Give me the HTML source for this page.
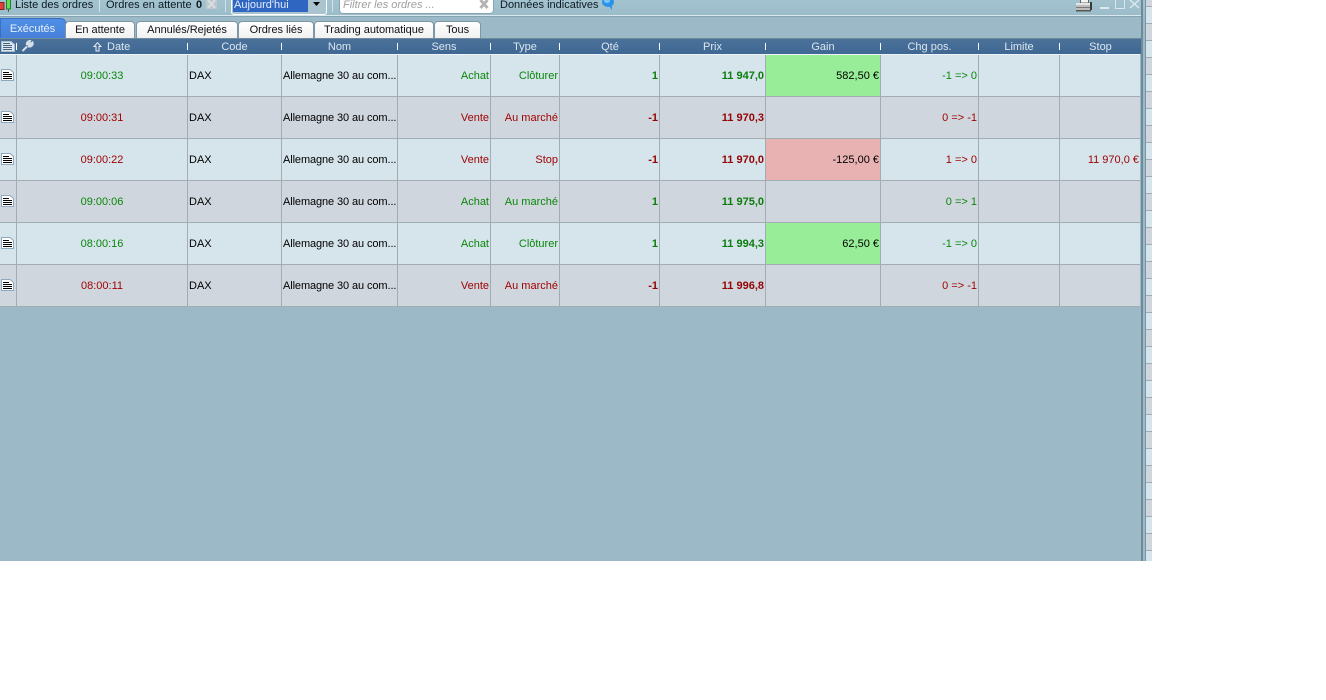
<!DOCTYPE html>
<html><head><meta charset="utf-8"><style>
html,body{margin:0;padding:0;background:#fff;width:1326px;height:700px;overflow:hidden}
body{font-family:"Liberation Sans",sans-serif;font-size:11px;position:relative}
.a{position:absolute}
.bar{left:0;top:0;width:1146px;height:15px;background:linear-gradient(#a3c3d0,#9bbcc9);overflow:hidden}
.t{position:absolute;white-space:nowrap;color:#0c1a22;line-height:13px;top:-1px}
.sep{position:absolute;top:0;width:1px;height:12px;background:#d2e2e8}
.tab{position:absolute;top:21px;height:17px;line-height:17px;background:linear-gradient(#fff,#f0f0f0);border:1px solid #7d97a4;border-bottom:0;border-radius:4px 4px 0 0;text-align:center;color:#0e1116;box-sizing:content-box;letter-spacing:-.03px}
.hd{position:absolute;left:0;top:39px;width:1141px;height:15px;background:linear-gradient(#4b7199,#3f6894);color:#dbe6ef;line-height:15px}
.hd span{position:absolute;text-align:center;top:1px}
.hd i{position:absolute;top:4px;height:7px;width:1px;background:#fff}
table{position:absolute;left:0;top:55px;border-collapse:separate;border-spacing:0;table-layout:fixed;width:1140px}
td{height:40px;padding:1px 1px 0 0;border-bottom:1px solid #a2acb3;border-right:1px solid #a2acb3;text-align:right;white-space:nowrap;overflow:hidden;box-sizing:content-box;line-height:40px;color:#000}
tr.o td{background:#d6e4ec}
tr.e td{background:#d0d6dd}
td.l{text-align:left;padding:1px 0 0 1px}
td.n{letter-spacing:-.1px}
td.c{text-align:center;padding:1px 0 0 0}
td.i{padding:0}
td.x{border-right:0}
td.h{padding-right:1px}
.g{color:#0a860a}.r{color:#a00404}
b.g{color:#0a7d0a}b.r{color:#940404}
tr.o td.pg,tr.e td.pg{background:#98ee98}
tr.o td.pr,tr.e td.pr{background:#e9b2b2}
.doc{display:block;margin:0 0 0 1px;position:relative;top:-1px}
</style></head><body>
<div class="a" style="left:0;top:0;width:1146px;height:561px;background:#9bb9c7"></div>
<div class="a bar">
<svg class="a" style="left:0;top:0" width="14" height="12"><rect x="-1" y="2.500" width="5" height="7" fill="#e0403a" stroke="#8a2020"/><rect x="6.500" y="-1" width="4" height="10" fill="#5fe05a" stroke="#2a7a2a"/><rect x="8" y="9" width="1" height="3" fill="#2a7a2a"/></svg>
<div class="t" style="left:15px">Liste des ordres</div>
<div class="sep" style="left:99px"></div>
<div class="t" style="left:106px">Ordres en attente</div>
<div class="t" style="left:196px;font-weight:bold">0</div>
<svg class="a" style="left:206px;top:0" width="11" height="9"><rect width="11" height="9" fill="#bcc8cc"/><path d="M2 0L9 8M9 0L2 8" stroke="#d8dfe2" stroke-width="2"/></svg>
<div class="sep" style="left:225px"></div>
<div class="a" style="left:231px;top:-2px;width:94px;height:15px;border:1px solid #fff;border-radius:3px;background:#a9c4cf"></div>
<div class="a" style="left:233px;top:0;width:75px;height:12px;background:#2e66c2"></div>
<div class="t" style="left:234px;color:#e4eefc">Aujourd'hui</div>
<svg class="a" style="left:313px;top:2px" width="7" height="4"><path d="M0 0H7L3.500 4Z" fill="#000"/></svg>
<div class="sep" style="left:332px"></div>
<div class="a" style="left:339px;top:-3px;width:155px;height:17px;background:#fff;border-radius:4px;border:0;box-shadow:0 0 0 1px #8aa3b0 inset"></div>
<div class="t" style="left:343px;color:#a0a0a0;font-style:italic">Filtrer les ordres ...</div>
<svg class="a" style="left:479px;top:0" width="10" height="9"><path d="M1.500 0L8.500 8M8.500 0L1.500 8" stroke="#b4b4b4" stroke-width="3"/></svg>
<div class="t" style="left:500px">Données indicatives</div>
<svg class="a" style="left:601px;top:0" width="14" height="11"><ellipse cx="7" cy="2" rx="6" ry="5" fill="#2c94e6"/><path d="M8 6L11 10L11 5Z" fill="#2c94e6"/><ellipse cx="6" cy="1" rx="3" ry="2" fill="#7cc4f4"/></svg>
<svg class="a" style="left:1075px;top:0" width="18" height="13"><rect x="5.500" y="-1" width="8" height="4" fill="#f4f4f4" stroke="#666"/><rect x="1" y="3" width="15" height="8" fill="#bdbdbd"/><rect x="1" y="3" width="15" height="2" fill="#e4e4e4"/><rect x="1" y="7" width="15" height="1" fill="#777"/><rect x="1" y="10" width="15" height="1.500" fill="#555"/><rect x="15" y="2" width="2" height="8" fill="#3a3a3a"/></svg>
<div class="a" style="left:1100px;top:7px;width:9px;height:2px;background:#eef4f6;opacity:.8"></div>
<div class="a" style="left:1115px;top:-1px;width:8px;height:8px;border:1px solid #dbe7ec"></div>
<svg class="a" style="left:1129px;top:0" width="11" height="9"><path d="M1 0L10 8M10 0L1 8" stroke="#dbe7ec" stroke-width="1.500"/></svg>
</div>
<div class="a" style="left:0;top:15px;width:1142px;height:1px;background:#d9e8ee"></div>
<div class="a" style="left:0;top:16px;width:1142px;height:1px;background:#86a3b1"></div>
<div class="a" style="left:0;top:18px;width:63px;padding-right:1px;height:20px;line-height:20px;background:linear-gradient(#4f8fe6,#4680d8);border:1px solid #3b6fc0;border-bottom:0;border-radius:0 5px 0 0;color:#e7f0fb;text-align:center">Exécutés</div>
<div class="tab" style="left:65px;width:68px">En attente</div>
<div class="tab" style="left:136px;width:100px">Annulés/Rejetés</div>
<div class="tab" style="left:238px;width:74px">Ordres liés</div>
<div class="tab" style="left:314px;width:118px">Trading automatique</div>
<div class="tab" style="left:434px;width:45px">Tous</div>
<div class="a" style="left:0;top:38px;width:1141px;height:1px;background:#6f8b9b"></div>
<div class="hd">
<svg class="a" style="left:1px;top:1px" width="14" height="12"><path d="M0.500 1.500H10L13.500 4.500V11.500H0.500Z" fill="#dfe7ef" stroke="#a9bccd"/><path d="M2 3.500H9M2 5.500H11M2 7.500H11M2 9.500H11" stroke="#45607f"/></svg>
<i style="left:16px"></i>
<svg class="a" style="left:21px;top:1px" width="13" height="12"><path d="M1.500 11L6 6.500M7 6A3 3 0 0 0 11.500 2.500L9.500 4L8 3.500L9 1A3 3 0 0 0 6 5" stroke="#d4dee8" stroke-width="2" fill="#d4dee8"/></svg>
<svg class="a" style="left:93px;top:3px" width="9" height="10"><path d="M4.500 0.700L8 4.500H6V9H3V4.500H1Z" fill="#4b7199" stroke="#e6eef5"/></svg>
<span style="left:107px;width:22px">Date</span><i style="left:187px"></i>
<span style="left:188px;width:93px">Code</span><i style="left:281px"></i>
<span style="left:282px;width:115px">Nom</span><i style="left:397px"></i>
<span style="left:398px;width:92px">Sens</span><i style="left:490px"></i>
<span style="left:491px;width:68px">Type</span><i style="left:559px"></i>
<span style="left:560px;width:100px">Qté</span><i style="left:659px"></i>
<span style="left:660px;width:105px">Prix</span><i style="left:765px"></i>
<span style="left:766px;width:114px">Gain</span><i style="left:880px"></i>
<span style="left:881px;width:97px">Chg pos.</span><i style="left:978px"></i>
<span style="left:979px;width:80px">Limite</span><i style="left:1059px"></i>
<span style="left:1060px;width:81px">Stop</span>
</div>
<div class="a" style="left:0;top:54px;width:1140px;height:1px;background:#eef4f7"></div>
<table>
<colgroup><col style="width:17px"><col style="width:171px"><col style="width:94px"><col style="width:116px"><col style="width:93px"><col style="width:69px"><col style="width:100px"><col style="width:106px"><col style="width:115px"><col style="width:98px"><col style="width:81px"><col style="width:80px"></colgroup>
<tr class="o"><td class="i"><svg class="doc" width="13" height="12"><path d="M0.500 0.500H9L12.500 3.500V11.500H0.500Z" fill="#fff" stroke="#8fa8bf"/><path d="M2 3.500H8M2 5.500H11M2 7.500H11M2 9.500H11" stroke="#000"/></svg></td><td class="c g">09:00:33</td><td class="l">DAX</td><td class="l n">Allemagne 30 au com...</td><td class="g">Achat</td><td class="g">Clôturer</td><td><b class="g">1</b></td><td><b class="g">11 947,0</b></td><td class="pg">582,50 €</td><td class="g h">-1 =&gt; 0</td><td></td><td class="x"></td></tr>
<tr class="e"><td class="i"><svg class="doc" width="13" height="12"><path d="M0.500 0.500H9L12.500 3.500V11.500H0.500Z" fill="#fff" stroke="#8fa8bf"/><path d="M2 3.500H8M2 5.500H11M2 7.500H11M2 9.500H11" stroke="#000"/></svg></td><td class="c r">09:00:31</td><td class="l">DAX</td><td class="l n">Allemagne 30 au com...</td><td class="r">Vente</td><td class="r">Au marché</td><td><b class="r">-1</b></td><td><b class="r">11 970,3</b></td><td></td><td class="r h">0 =&gt; -1</td><td></td><td class="x"></td></tr>
<tr class="o"><td class="i"><svg class="doc" width="13" height="12"><path d="M0.500 0.500H9L12.500 3.500V11.500H0.500Z" fill="#fff" stroke="#8fa8bf"/><path d="M2 3.500H8M2 5.500H11M2 7.500H11M2 9.500H11" stroke="#000"/></svg></td><td class="c r">09:00:22</td><td class="l">DAX</td><td class="l n">Allemagne 30 au com...</td><td class="r">Vente</td><td class="r">Stop</td><td><b class="r">-1</b></td><td><b class="r">11 970,0</b></td><td class="pr">-125,00 €</td><td class="r h">1 =&gt; 0</td><td></td><td class="x r">11 970,0 €</td></tr>
<tr class="e"><td class="i"><svg class="doc" width="13" height="12"><path d="M0.500 0.500H9L12.500 3.500V11.500H0.500Z" fill="#fff" stroke="#8fa8bf"/><path d="M2 3.500H8M2 5.500H11M2 7.500H11M2 9.500H11" stroke="#000"/></svg></td><td class="c g">09:00:06</td><td class="l">DAX</td><td class="l n">Allemagne 30 au com...</td><td class="g">Achat</td><td class="g">Au marché</td><td><b class="g">1</b></td><td><b class="g">11 975,0</b></td><td></td><td class="g h">0 =&gt; 1</td><td></td><td class="x"></td></tr>
<tr class="o"><td class="i"><svg class="doc" width="13" height="12"><path d="M0.500 0.500H9L12.500 3.500V11.500H0.500Z" fill="#fff" stroke="#8fa8bf"/><path d="M2 3.500H8M2 5.500H11M2 7.500H11M2 9.500H11" stroke="#000"/></svg></td><td class="c g">08:00:16</td><td class="l">DAX</td><td class="l n">Allemagne 30 au com...</td><td class="g">Achat</td><td class="g">Clôturer</td><td><b class="g">1</b></td><td><b class="g">11 994,3</b></td><td class="pg">62,50 €</td><td class="g h">-1 =&gt; 0</td><td></td><td class="x"></td></tr>
<tr class="e"><td class="i"><svg class="doc" width="13" height="12"><path d="M0.500 0.500H9L12.500 3.500V11.500H0.500Z" fill="#fff" stroke="#8fa8bf"/><path d="M2 3.500H8M2 5.500H11M2 7.500H11M2 9.500H11" stroke="#000"/></svg></td><td class="c r">08:00:11</td><td class="l">DAX</td><td class="l n">Allemagne 30 au com...</td><td class="r">Vente</td><td class="r">Au marché</td><td><b class="r">-1</b></td><td><b class="r">11 996,8</b></td><td></td><td class="r h">0 =&gt; -1</td><td></td><td class="x"></td></tr>
</table>
<div class="a" style="left:1141px;top:0;width:2px;height:561px;background:#6f8b98"></div>
<div class="a" style="left:1145px;top:0;width:1px;height:561px;background:#7a96a4"></div>
<div class="a" style="left:1146px;top:0;width:6px;height:561px;overflow:hidden"><div class="a" style="left:0;top:-10px;width:6px;height:580px;background:repeating-linear-gradient(#d0d6dd 0,#d0d6dd 16px,#a2acb3 16px,#a2acb3 17px,#d6e4ec 17px,#d6e4ec 33px,#a2acb3 33px,#a2acb3 34px)"></div></div>
</body></html>
